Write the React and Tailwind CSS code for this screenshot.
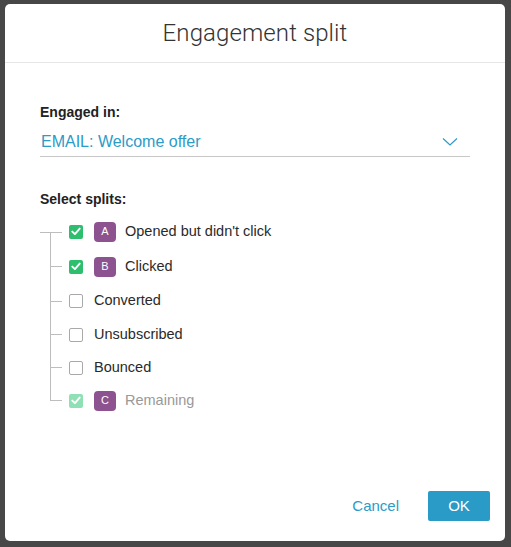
import React from "react";

const splits = [
  { label: "Opened but didn't click", badge: "A", checked: true, h: "h-[35px]" },
  { label: "Clicked", badge: "B", checked: true, h: "h-[35px]" },
  { label: "Converted", checked: false, h: "h-[34px]" },
  { label: "Unsubscribed", checked: false, h: "h-[33px]" },
  { label: "Bounced", checked: false, h: "h-[33px]" },
  { label: "Remaining", badge: "C", checked: true, disabled: true, h: "h-[33px]" },
];

function Check({ checked, disabled }) {
  if (!checked) {
    return <div className="w-[14px] h-[14px] rounded-[2px] border border-[#a9a9a9] bg-white" />;
  }
  return (
    <div
      className={
        disabled
          ? "w-[14px] h-[14px] rounded-[2px] bg-[#8fe0b5] flex items-center justify-center"
          : "w-[14px] h-[14px] rounded-[2px] bg-[#2dbf6e] flex items-center justify-center"
      }
    >
      <svg width="10" height="9" viewBox="0 0 10 9" fill="none">
        <path d="M1.3 4.6 L3.9 7.1 L8.7 1.6" stroke="white" strokeWidth="1.9" strokeLinecap="round" strokeLinejoin="round" />
      </svg>
    </div>
  );
}

function Connector({ first, last }) {
  return (
    <div className="w-[22px] self-stretch flex flex-col">
      <div className={first ? "flex-1" : last ? "flex-1 ml-[10px] border-l border-b border-[#bdbdbd]" : "flex-1 ml-[10px] border-l border-[#bdbdbd]"} />
      {first ? (
        <div className="flex-1 flex">
          <div className="w-[10px] border-t border-[#bdbdbd]" />
          <div className="flex-1 border-l border-t border-[#bdbdbd]" />
        </div>
      ) : last ? (
        <div className="flex-1" />
      ) : (
        <div className="flex-1 ml-[10px] border-l border-t border-[#bdbdbd]" />
      )}
    </div>
  );
}

export default function App() {
  return (
    <div
      className="w-[511px] h-[547px] bg-[#474747] pl-[5px] pt-[4px] overflow-hidden"
      style={{ fontFamily: '"Liberation Sans", Arial, sans-serif' }}
    >
      <div className="w-[500px] h-[537px] bg-white rounded-[5px] flex flex-col">
        {/* Header */}
        <div className="h-[59px] border-b border-[#e6e6e6] flex items-center justify-center">
          <h1
            className="text-[24px] font-light text-[#333] tracking-[0.1px]"
            style={{ fontFamily: 'Roboto, "Liberation Sans", sans-serif' }}
          >
            Engagement split
          </h1>
        </div>

        {/* Body */}
        <div className="flex-1 px-[35px] pt-[41px]">
          <div className="text-[14px] font-bold text-[#222] leading-[17px]">Engaged in:</div>
          <div className="mt-[8px] h-[28px] border-b border-[#c8c8c8] flex items-center justify-between pb-[2px]">
            <span className="text-[16px] text-[#2b9bc8] pl-[1px]">EMAIL: Welcome offer</span>
            <svg width="16" height="10" viewBox="0 0 16 10" className="mr-[12px]">
              <path d="M1 1.5 L8 8 L15 1.5" stroke="#2b9bc8" strokeWidth="1.2" fill="none" />
            </svg>
          </div>

          <div className="mt-[34px] text-[14px] font-bold text-[#222] leading-[17px]">Select splits:</div>

          <div className="mt-[6px] flex flex-col">
            {splits.map((s, i) => (
              <div key={s.label} className={s.h + " flex items-center"}>
                <Connector first={i === 0} last={i === splits.length - 1} />
                <div className="ml-[7px]">
                  <Check checked={s.checked} disabled={s.disabled} />
                </div>
                {s.badge && (
                  <div className="ml-[11px] w-[22px] h-[20px] rounded-[4px] bg-[#8d5290] text-white text-[11px] flex items-center justify-center">
                    {s.badge}
                  </div>
                )}
                <span
                  className={
                    (s.badge ? "ml-[9px] " : "ml-[11px] ") +
                    (s.disabled ? "text-[14.5px] text-[#999]" : "text-[14.5px] text-[#2a2a2a]")
                  }
                >
                  {s.label}
                </span>
              </div>
            ))}
          </div>
        </div>

        {/* Footer */}
        <div className="flex items-center justify-end pr-[15px] pb-[20px] gap-[29px]">
          <button className="text-[15px] text-[#2b9bc8]">Cancel</button>
          <button className="w-[62px] h-[30px] bg-[#2a9ac6] rounded-[2px] text-white text-[15px]">OK</button>
        </div>
      </div>
    </div>
  );
}
